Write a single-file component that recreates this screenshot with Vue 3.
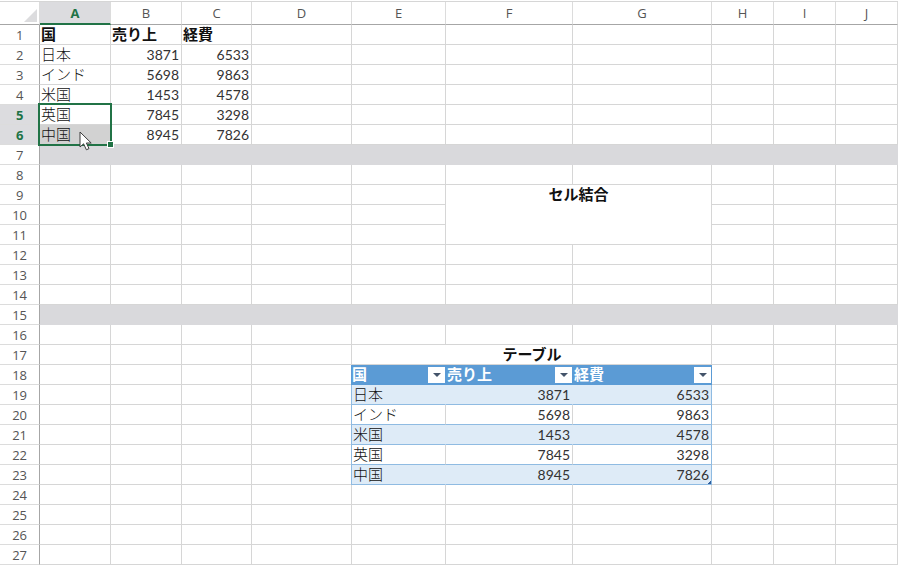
<script setup>
const colWidths = [40, 71, 71, 70, 100, 94, 127, 139, 62, 62, 62]
const letters = ['A', 'B', 'C', 'D', 'E', 'F', 'G', 'H', 'I', 'J']
const rowCount = 27

const countries = ['日本', 'インド', '米国', '英国', '中国']
const sales = [3871, 5698, 1453, 7845, 8945]
const costs = [6533, 9863, 4578, 3298, 7826]

const cells = new Map()
const put = (col, row, text, cls = '', span = 1, rowSpan = 1) =>
  cells.set(`${col}-${row}`, { col, row, text, cls, span, rowSpan })

for (let r = 1; r <= rowCount; r++) {
  for (let c = 1; c <= 10; c++) {
    put(c, r, '', r === 7 || r === 15 ? 'band' : '')
  }
}

// Top-left data block
put(1, 1, '国', 'jp bold')
put(2, 1, '売り上', 'jp bold')
put(3, 1, '経費', 'jp bold')
countries.forEach((name, i) => {
  const extra = i === 4 ? ' picked' : ''
  put(1, i + 2, name, 'jp' + extra)
  put(2, i + 2, sales[i], 'num')
  put(3, i + 2, costs[i], 'num')
})

// Merged F9:G11
put(6, 9, 'セル結合', 'jp bold merged', 2, 3)
for (const [c, r] of [[7, 9], [6, 10], [7, 10], [6, 11], [7, 11]]) cells.delete(`${c}-${r}`)

// Merged E17:G17
put(5, 17, 'テーブル', 'jp bold caption', 3, 1)
cells.delete('6-17')
cells.delete('7-17')

// Table E18:G23
const heads = ['国', '売り上', '経費']
heads.forEach((h, i) => put(5 + i, 18, h, 'jp bold thead' + (i === 0 ? ' tleft' : '')))
countries.forEach((name, i) => {
  const row = i + 19
  const stripe = i % 2 === 0 ? ' stripe' : ' plain'
  put(5, row, name, 'jp tbody tleft' + stripe)
  put(6, row, sales[i], 'num tbody' + stripe)
  put(7, row, costs[i], 'num tbody tright' + stripe)
})

const items = [...cells.values()]
const rows = Array.from({ length: rowCount }, (_, i) => i + 1)

const placement = (c) => ({
  gridColumn: `${c.col + 1} / span ${c.span}`,
  gridRow: `${c.row + 1} / span ${c.rowSpan}`,
})
const gridCols = colWidths.map((w) => w + 'px').join(' ')
</script>

<template>
  <div class="sheet">
    <div class="grid" :style="{ gridTemplateColumns: gridCols }">
      <div class="corner">
        <svg class="corner-mark" width="13" height="13" viewBox="0 0 13 13">
          <path d="M13 0V13H0Z" fill="#dcdcde" />
        </svg>
      </div>
      <div
        v-for="(l, i) in letters"
        :key="l"
        class="colhead"
        :class="{ active: i === 0 }"
        :style="{ gridColumn: i + 2, gridRow: 1 }"
      >{{ l }}</div>
      <div
        v-for="r in rows"
        :key="'r' + r"
        class="rowhead"
        :class="{ active: r === 5 || r === 6 }"
        :style="{ gridColumn: 1, gridRow: r + 1 }"
      >{{ r }}</div>
      <div
        v-for="c in items"
        :key="c.col + '-' + c.row"
        class="cell"
        :class="c.cls"
        :style="placement(c)"
      >
        <span>{{ c.text }}</span>
        <span v-if="c.cls.includes('thead')" class="filter"><i class="arrow"></i></span>
        <i v-if="c.col === 7 && c.row === 23" class="resize"></i>
      </div>
    </div>

    <div class="selection"><i class="handle"></i></div>
    <svg class="cursor" width="14" height="20" viewBox="0 0 14 20">
      <path
        d="M1 1V16L4.6 12.8L7.4 18.8L10 17.6L7.4 12H12.2Z"
        fill="#fff"
        stroke="#3c3c3c"
        stroke-width="1"
        stroke-linejoin="round"
      />
    </svg>
  </div>
</template>

<style>
html, body {
  margin: 0;
  background: #fff;
}
</style>

<style scoped>
.sheet {
  position: relative;
  width: 898px;
  height: 566px;
  overflow: hidden;
  background: #fff;
  padding-top: 1px;
  box-sizing: border-box;
}
.grid {
  display: grid;
  grid-template-rows: 23px repeat(27, 20px);
  border-top: 1px solid #d6d6d6;
}
.corner {
  grid-column: 1;
  grid-row: 1;
  position: relative;
  background: #fff;
  border-right: 1px solid #dcdcdc;
  border-bottom: 1px solid #a6a6a6;
  box-sizing: border-box;
}
.corner-mark {
  position: absolute;
  right: 2px;
  bottom: 2px;
}
.colhead {
  box-sizing: border-box;
  display: flex;
  align-items: center;
  justify-content: center;
  background: #fff;
  border-right: 1px solid #dcdcdc;
  border-bottom: 1px solid #a6a6a6;
  color: #555;
  font: 13px "Open Sans", sans-serif;
}
.colhead.active {
  background: #dcdcdf;
  color: #217346;
  font-weight: 700;
  border-bottom: 2px solid #217346;
}
.rowhead {
  box-sizing: border-box;
  display: flex;
  align-items: center;
  justify-content: center;
  background: #fff;
  border-right: 1px solid #a6a6a6;
  border-bottom: 1px solid #dcdcdc;
  color: #555;
  font: 13px "Open Sans", sans-serif;
  letter-spacing: -0.3px;
}
.rowhead.active {
  background: #dcdcdf;
  color: #217346;
  font-weight: 700;
}
.cell {
  box-sizing: border-box;
  display: flex;
  align-items: center;
  position: relative;
  padding: 0 1px;
  border-right: 1px solid #d6d6d6;
  border-bottom: 1px solid #d6d6d6;
  color: #111;
  white-space: nowrap;
  background: #fff;
}
.band {
  background: #d9d9dc;
  border-color: #d9d9dc;
}
.jp {
  font: 300 15px "Noto Sans CJK JP", sans-serif;
  padding-bottom: 2px;
}
.bold {
  font-weight: 700;
  color: #111;
}
.num {
  font: 14px Lato, "Liberation Sans", sans-serif;
  justify-content: flex-end;
  color: #333;
  padding-right: 2px;
}
.picked {
  background: #d2d2d2;
}
.merged {
  align-items: flex-start;
  justify-content: center;
  line-height: 18px;
  padding-bottom: 0;
}
.caption {
  justify-content: center;
  padding-left: 2px;
  padding-right: 1px;
  border-right-color: #d6d6d6;
}
.thead {
  background: #5b9bd5;
  border-color: #5b9bd5;
  color: #fff;
  justify-content: space-between;
  align-items: center;
  padding-right: 0;
}
.tleft {
  border-left: 1px solid #5b9bd5;
  margin-left: -1px;
  padding-left: 0;
}
.tbody {
  border-bottom-color: #8fbbe2;
}
.tbody.tleft {
  border-left-color: #8fbbe2;
  padding-left: 1px;
}
.tright {
  border-right-color: #8fbbe2;
}
.stripe {
  background: #deebf7;
  border-right-color: #deebf7;
}
.stripe.tright {
  border-right-color: #8fbbe2;
}
.filter {
  width: 17px;
  height: 16px;
  background: #fff;
  display: flex;
  align-items: center;
  justify-content: center;
  flex: none;
  margin-bottom: -2px;
}
.arrow {
  width: 0;
  height: 0;
  border-left: 4px solid transparent;
  border-right: 4px solid transparent;
  border-top: 4px solid #44546a;
}
.resize {
  position: absolute;
  right: 0;
  bottom: 0;
  width: 3px;
  height: 3px;
  background: linear-gradient(135deg, transparent 50%, #2f5f9e 50%);
}
.selection {
  position: absolute;
  left: 38px;
  top: 103px;
  width: 74px;
  height: 43px;
  box-sizing: border-box;
  border: 2px solid #217346;
}
.handle {
  position: absolute;
  right: -3px;
  bottom: -3px;
  width: 5px;
  height: 5px;
  background: #217346;
  outline: 1px solid #fff;
}
.cursor {
  position: absolute;
  left: 79px;
  top: 131px;
}
</style>
